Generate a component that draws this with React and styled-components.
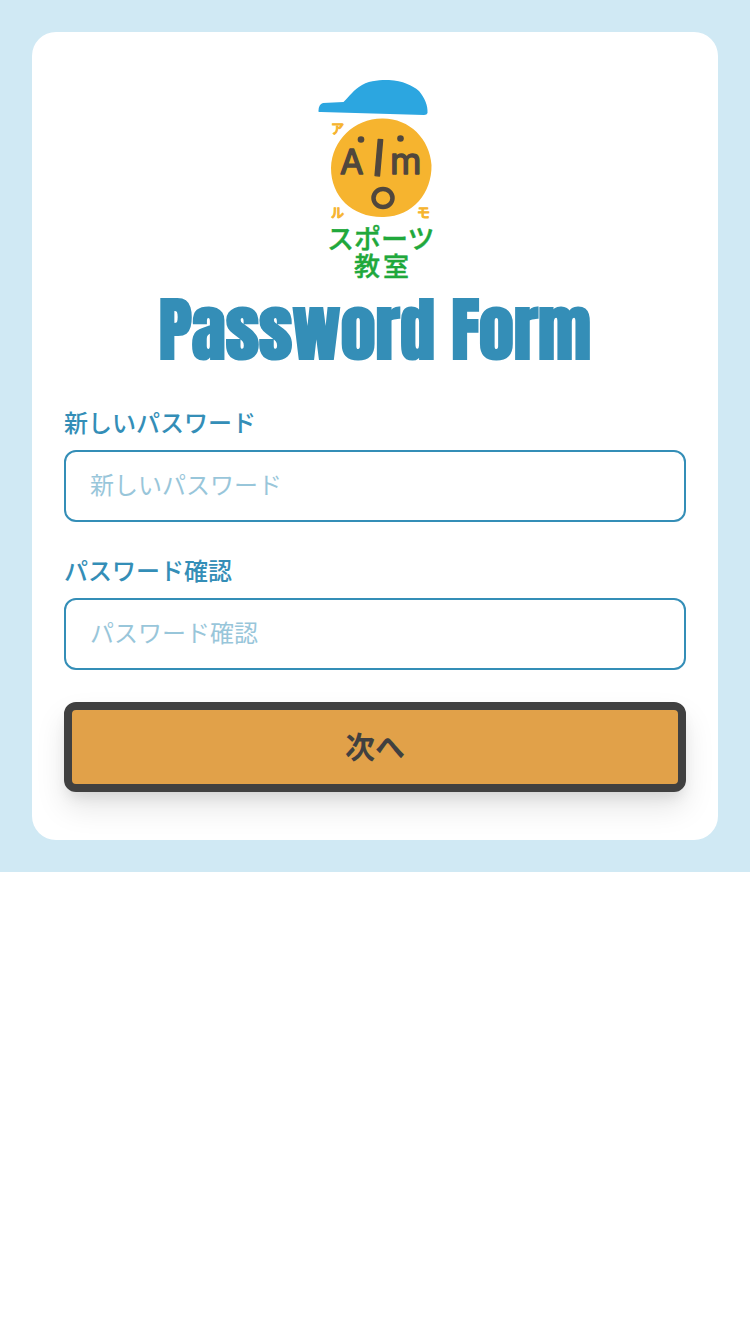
import React from "react";
import styled, { createGlobalStyle } from "styled-components";

const GlobalStyle = createGlobalStyle`
  *, *::before, *::after { box-sizing: border-box; }
  body {
    margin: 0;
    background: #fff;
    font-family: "Noto Sans CJK JP", sans-serif;
  }
`;

const Page = styled.main`
  padding: 32px;
  background: #d0e9f4;
`;

const Card = styled.form`
  display: flex;
  flex-direction: column;
  gap: 32px;
  padding: 48px 32px;
  border-radius: 24px;
  background: #fff;
`;

const Header = styled.header`
  display: flex;
  flex-direction: column;
  align-items: center;
`;

const LogoArt = styled.svg`
  display: block;
  width: 200px;
  height: 200px;
  overflow: visible;
`;

const Title = styled.h1`
  margin: 0;
  padding-top: 6px;
  color: #348eb7;
  font-family: Impact, Anton, "DejaVu Sans Condensed", sans-serif;
  font-size: 70px;
  font-weight: 700;
  line-height: 88px;
  text-align: center;
`;

const Field = styled.div`
  display: flex;
  flex-direction: column;
  gap: 12px;
`;

const Label = styled.label`
  color: #348eb7;
  font-size: 24px;
  font-weight: 500;
  line-height: 32px;
`;

const TextInput = styled.input`
  width: 100%;
  height: 72px;
  padding: 0 24px 6px;
  border: 2px solid #348eb7;
  border-radius: 12px;
  background: #fff;
  color: #348eb7;
  font-family: inherit;
  font-size: 24px;
  &::placeholder { color: #348eb7; opacity: 0.5; }
`;

const SubmitButton = styled.button`
  height: 90px;
  padding: 0 24px 4px;
  border: 8px solid #404040;
  border-radius: 12px;
  background: #e1a149;
  color: #404040;
  font-family: inherit;
  font-size: 30px;
  font-weight: 700;
  box-shadow: 0 16px 30px rgba(0, 0, 0, 0.1), 0 8px 14px -4px rgba(0, 0, 0, 0.1);
  cursor: pointer;
`;

const Kana = styled.text`
  fill: #f6b42f;
  stroke: #f6b42f;
  stroke-width: 1;
  stroke-linejoin: round;
  font-family: "Noto Sans CJK JP", sans-serif;
  font-size: 13px;
  font-weight: 500;
`;

const SchoolName = styled.text`
  fill: #20a83b;
  font-family: "Noto Sans CJK JP", sans-serif;
  font-size: ${(p) => p.$size}px;
  font-weight: 500;
  stroke: #20a83b;
  stroke-width: 0.4;
  stroke-linejoin: round;
`;

const FaceLetter = styled.text`
  fill: #50473d;
  stroke: #50473d;
  stroke-width: 1.4;
  stroke-linejoin: round;
  font-family: Inter, sans-serif;
  font-size: ${(p) => p.$size}px;
`;

function Logo() {
  return (
    <LogoArt viewBox="0 0 200 200" role="img" aria-label="アルモスポーツ教室">
      <path
        d="M43.400 31.500 Q43.500 24 48 23 L68.500 22 C75 16 78 10 87 5 C96 0 106 0 114 0 C128 1 137 5 144 11 C150 18 153 26 152.500 33 Q152 35 149 35 L46 32 Q43.500 32 43.400 31.500 Z"
        fill="#2ca6e0"
      />
      <path
        d="M107 38.500 C134 38 155 59 156.500 85 C157 113 138 136 109 137 C78 138 56 117 56 88 C57 60 79 39 107 38.500 Z"
        fill="#f6b42f"
      />
      <circle cx="86" cy="59.500" r="3.300" fill="#50473d" />
      <circle cx="125.500" cy="58.500" r="3.300" fill="#50473d" />
      <FaceLetter x="65" y="94" $size={34}>A</FaceLetter>
      <FaceLetter x="98" y="96" $size={50} transform="rotate(5 105 77)">l</FaceLetter>
      <FaceLetter x="115" y="94" $size={36}>m</FaceLetter>
      <ellipse cx="108" cy="118" rx="9.500" ry="9" fill="none" stroke="#50473d" strokeWidth="4.500" />
      <Kana x="56" y="53">ア</Kana>
      <Kana x="56" y="137">ル</Kana>
      <Kana x="142" y="137">モ</Kana>
      <SchoolName x="52" y="169" $size={27}>スポーツ</SchoolName>
      <SchoolName x="79" y="196" $size={26}>教</SchoolName>
      <SchoolName x="108" y="196" $size={26}>室</SchoolName>
    </LogoArt>
  );
}

function PasswordField({ id, label }) {
  return (
    <Field>
      <Label htmlFor={id}>{label}</Label>
      <TextInput id={id} name={id} type="password" autoComplete="new-password" placeholder={label} />
    </Field>
  );
}

export default function App() {
  return (
    <>
      <GlobalStyle />
      <Page>
        <Card onSubmit={(event) => event.preventDefault()}>
          <Header>
            <Logo />
            <Title>Password Form</Title>
          </Header>
          <PasswordField id="new-password" label="新しいパスワード" />
          <PasswordField id="confirm-password" label="パスワード確認" />
          <SubmitButton type="submit">次へ</SubmitButton>
        </Card>
      </Page>
    </>
  );
}
